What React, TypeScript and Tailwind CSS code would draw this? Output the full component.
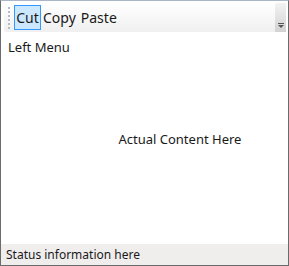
import React from 'react';

export default function App() {
    return (
        <div className="w-[289px] h-[266px] flex flex-col bg-white border border-[#6b6b6b] border-t-[#a9b7c9] font-['Noto_Sans',sans-serif] text-[#1a1a1a] overflow-hidden">
            <div className="pt-[2px] pl-[3px] pr-[2px]">
                <div className="h-[29px] flex items-center bg-gradient-to-b from-white to-[#f0f0f0] rounded-l-[3px]">
                    <div className="w-[2px] ml-[4px] mr-[4px] flex flex-col gap-[2px] items-center">
                        {[0, 1, 2, 3, 4, 5].map((i) => (
                            <div key={i} className="w-[2px] h-[2px] bg-[#b5bcc7]" />
                        ))}
                    </div>
                    <button className="h-[25px] w-[27px] flex items-center justify-center border border-[#3399ff] bg-[#cce8ff] text-[14px] leading-none">Cut</button>
                    <button className="h-[25px] pl-[2px] pr-[3px] text-[14px] leading-none">Copy</button>
                    <button className="h-[25px] px-[2px] text-[14px] leading-none">Paste</button>
                    <div className="ml-auto w-[11px] h-[29px] bg-gradient-to-b from-[#f3f3f3] to-[#d2d2d2] rounded-tl-[3px] flex flex-col items-center justify-end pb-[3px]">
                        <div className="w-[6px] h-[1px] bg-[#555]" />
                        <svg width="6" height="4" viewBox="0 0 6 4" className="mt-[1px]">
                            <path d="M0 0 L6 0 L3 3 Z" fill="#555" />
                        </svg>
                    </div>
                </div>
            </div>
            <div className="flex-1 flex min-h-0">
                <div className="pl-[7px] pt-[7px] text-[13px] leading-[17px]">Left Menu</div>
                <div className="flex-1 flex items-center justify-center pl-[2px] pt-[4px] text-[13px]">Actual Content Here</div>
            </div>
            <div className="h-[21px] bg-[#f0eded] flex items-center pl-[5px] text-[12px]">Status information here</div>
        </div>
    );
}
